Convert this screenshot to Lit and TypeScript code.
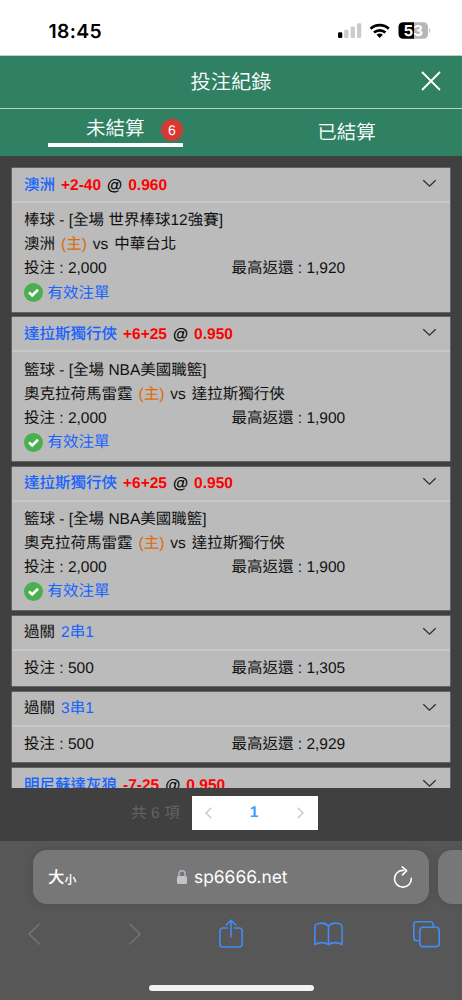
import { LitElement, html, css } from "lit";
import { customElement, property } from "lit/decorators.js";

interface Bet {
  pick: string;
  line?: string;
  odds?: string;
  parlay?: string;
  league?: string;
  home?: string;
  away?: string;
  stake?: string;
  payout?: string;
  valid?: boolean;
}

const mavericks: Bet = {
  pick: "達拉斯獨行俠",
  line: "+6+25",
  odds: "0.950",
  league: "籃球 - [全場 NBA美國職籃]",
  home: "奧克拉荷馬雷霆",
  away: "達拉斯獨行俠",
  stake: "2,000",
  payout: "1,900",
  valid: true,
};

const bets: Bet[] = [
  {
    pick: "澳洲",
    line: "+2-40",
    odds: "0.960",
    league: "棒球 - [全場 世界棒球12強賽]",
    home: "澳洲",
    away: "中華台北",
    stake: "2,000",
    payout: "1,920",
    valid: true,
  },
  mavericks,
  mavericks,
  { pick: "過關", parlay: "2串1", stake: "500", payout: "1,305" },
  { pick: "過關", parlay: "3串1", stake: "500", payout: "2,929" },
  { pick: "明尼蘇達灰狼", line: "-7-25", odds: "0.950" },
];

@customElement("status-bar")
class StatusBar extends LitElement {
  static styles = css`
    :host {
      display: flex;
      box-sizing: border-box;
      height: 56px;
      padding: 7px 31px 0 48.5px;
      align-items: center;
      justify-content: space-between;
      background: #fff;
      border-bottom: 1px solid #b9d2c8;
      font-family: Inter, sans-serif;
    }
    .time {
      padding-top: 1px;
      font-size: 19.3px;
      font-weight: 600;
      letter-spacing: 0.35px;
      color: #000;
    }
    svg {
      display: block;
    }
    .num {
      font: 700 15px Inter, sans-serif;
    }
  `;
  render() {
    return html`<span class="time">18:45</span>
      <svg width="94" height="20" viewBox="337 21 94 20">
        <rect x="338" y="32.2" width="4.3" height="5.8" rx="1.2" fill="#000" />
        <g fill="#cbcbcb">
          <rect x="344.2" y="29.7" width="4.3" height="8.3" rx="1.2" />
          <rect x="350.6" y="26.6" width="4.3" height="11.4" rx="1.2" />
          <rect x="357" y="23.3" width="4.3" height="14.7" rx="1.2" />
        </g>
        <g fill="none" stroke="#000" stroke-width="2.7">
          <path d="M370.6 28.8 A13 13 0 0 1 388.8 28.8" />
          <path d="M374 32.6 A8.4 8.4 0 0 1 385.4 32.6" />
        </g>
        <path d="M376.5 34.8 A4.6 4.6 0 0 1 382.9 34.8 L379.7 38 Z" fill="#000" />
        <path d="M403.5 22.2 H414 V38.8 H403.5 Q398.5 38.8 398.5 33.8 V27.2 Q398.5 22.2 403.5 22.2Z" fill="#000" />
        <path d="M414 22.2 H423 Q428 22.2 428 27.2 V33.8 Q428 38.8 423 38.8 H414Z" fill="#b7b7b7" />
        <path d="M429.2 28 Q431.4 30.5 429.2 33Z" fill="#b7b7b7" />
        <text class="num" x="403.5" y="36" fill="#fff" textLength="19.4" lengthAdjust="spacingAndGlyphs">53</text>
      </svg>`;
  }
}

@customElement("bet-card")
class BetCard extends LitElement {
  @property({ attribute: false }) bet!: Bet;
  static styles = css`
    :host {
      display: block;
      flex: none;
      background: #bbb;
      color: #111;
      font-size: 15.5px;
      box-shadow: 0 0 0 0.5px #858585;
    }
    .head {
      display: flex;
      box-sizing: border-box;
      height: 35px;
      padding: 1.5px 13px 0 12px;
      align-items: center;
      gap: 6px;
      border-bottom: 2px solid #c8c8c8;
      white-space: pre;
    }
    .bold {
      font-weight: 700;
    }
    .cjk {
      font-weight: 500;
    }
    .head svg {
      margin-left: auto;
      margin-top: -4px;
    }
    .blue {
      color: #1663ff;
    }
    .red {
      color: #f00;
    }
    .orange {
      color: #dc6b08;
    }
    .black {
      color: #000;
    }
    .body {
      padding: 6px 12px;
    }
    .line {
      display: flex;
      height: 24px;
      align-items: center;
      gap: 6px;
      white-space: pre;
    }
    .money {
      display: grid;
      grid-template-columns: 207.5px 1fr;
      height: 24px;
      align-items: center;
    }
    .short {
      padding: 5.5px 12px 5.8px;
    }
    .valid {
      display: flex;
      align-items: center;
      gap: 4.5px;
      height: 24.5px;
    }
    .valid svg {
      margin-top: -1px;
    }
  `;
  render() {
    const b = this.bet;
    return html`
      <div class="head">
        ${b.parlay
          ? html`<span>${b.pick}</span><span class="blue">${b.parlay}</span>`
          : html`<span class="blue cjk">${b.pick}</span><span class="red bold">${b.line}</span
              ><span class="black bold">@</span><span class="red bold">${b.odds}</span>`}
        <svg width="15" height="9" viewBox="0 0 15 9" fill="none" stroke="#2b2b2b" stroke-width="1.2">
          <path d="M1.3 1.2 L7.5 7.2 L13.7 1.2" />
        </svg>
      </div>
      ${b.stake
        ? html`<div class="body ${b.league ? "" : "short"}">
            ${b.league
              ? html`<div class="line">${b.league}</div>
                  <div class="line">
                    <span>${b.home}</span><span class="orange">(主)</span><span>vs</span><span>${b.away}</span>
                  </div>`
              : ""}
            <div class="money"><span>投注 : ${b.stake}</span><span>最高返還 : ${b.payout}</span></div>
            ${b.valid
              ? html`<div class="valid">
                  <svg width="19" height="19" viewBox="0 0 19 19">
                    <circle cx="9.5" cy="9.5" r="9.5" fill="#4bae50" />
                    <path d="M5 9.4 L8.2 12.4 L14 6.8" fill="none" stroke="#fff" stroke-width="2.6" />
                  </svg>
                  <span class="blue">有效注單</span>
                </div>`
              : ""}
          </div>`
        : ""}
    `;
  }
}

@customElement("browser-bar")
class BrowserBar extends LitElement {
  static styles = css`
    :host {
      display: flex;
      flex-direction: column;
      box-sizing: border-box;
      height: 159px;
      padding-top: 9px;
      background: #575757;
      overflow: hidden;
    }
    svg {
      display: block;
    }
    .tabs {
      display: flex;
      gap: 9px;
      padding-left: 33px;
    }
    .address {
      display: flex;
      box-sizing: border-box;
      flex: none;
      width: 396px;
      height: 54px;
      padding: 0 16px 0 15px;
      align-items: center;
      border-radius: 14px;
      background: #777;
      box-shadow: 0 0 10px #0000001f;
      color: #fff;
    }
    .next {
      flex: none;
      width: 60px;
      height: 54px;
      border-radius: 14px;
      background: #777;
      box-shadow: 0 0 10px #0000001f;
    }
    .big {
      padding-top: 2px;
      font-size: 16.5px;
      font-weight: 500;
    }
    .small {
      padding-top: 5px;
      font-size: 12px;
      font-weight: 500;
    }
    .site {
      display: flex;
      flex: 1;
      align-items: center;
      justify-content: center;
      gap: 7px;
      padding-right: 5px;
      font: 17.4px Inter, sans-serif;
    }
    .tools {
      display: grid;
      grid-template-columns: 101px 91px 95px 99px 27px;
      padding: 15px 22px 0 27px;
    }
    .home {
      width: 165px;
      height: 6px;
      margin: 36px 0 0 149px;
      border-radius: 3px;
      background: #f2f2f2;
    }
  `;
  render() {
    return html`
      <div class="tabs">
        <div class="address">
          <span class="big">大</span><span class="small">小</span>
          <div class="site">
            <svg width="10" height="14" viewBox="0 0 10 14">
              <path d="M2 7 V3.8 A3 3 0 0 1 8 3.8 V7" fill="none" stroke="#b7b7be" stroke-width="1.4" />
              <rect y="6" width="10" height="8" rx="1.5" fill="#c2c2ca" />
            </svg>
            <span>sp6666.net</span>
          </div>
          <svg width="20" height="22" viewBox="0 0 20 22" fill="none" stroke="#fff" stroke-width="1.6" stroke-linecap="round" stroke-linejoin="round">
            <path d="M10.6 4.4 A8.4 8.4 0 1 0 18.3 12.3" />
            <path d="M9.3 .9 L13.6 4.7 L9.5 8.9" />
          </svg>
        </div>
        <div class="next"></div>
      </div>
      <div class="tools">
        <svg width="14" height="30" viewBox="0 0 14 30" fill="none" stroke="#737373" stroke-width="1.6" stroke-linecap="round"><path d="M12.3 5 L2 15 L12.3 25" /></svg>
        <svg width="14" height="30" viewBox="0 0 14 30" fill="none" stroke="#737373" stroke-width="1.6" stroke-linecap="round"><path d="M1.7 5 L12 15 L1.7 25" /></svg>
        <svg width="24" height="30" viewBox="0 0 24 30" fill="none" stroke="#428cf2" stroke-width="1.6" stroke-linecap="round" stroke-linejoin="round">
          <path d="M8.5 9 H3.8 Q.9 9 .9 12 V25 Q.9 28 3.8 28 H20.2 Q23.1 28 23.1 25 V12 Q23.1 9 20.2 9 H15.5" />
          <path d="M12 18 V1.3 M7.2 6 L12 1.2 L16.8 6" />
        </svg>
        <svg width="29" height="30" viewBox="0 0 29 30" fill="none" stroke="#428cf2" stroke-width="1.6" stroke-linejoin="round">
          <path d="M14.5 7 Q11.8 4.1 7.7 4.1 Q4.4 4.1 1.8 5.6 Q.9 6.2 .9 7.4 V25.6 Q4 23.6 7.7 23.6 Q11.8 23.6 14.5 25.6 Q17.2 23.6 21.3 23.6 Q25 23.6 28.1 25.6 V7.4 Q28.1 6.2 27.2 5.6 Q24.6 4.1 21.3 4.1 Q17.2 4.1 14.5 7 V25.6" />
        </svg>
        <svg width="27" height="30" viewBox="0 0 27 30" fill="none" stroke="#428cf2" stroke-width="1.6">
          <path d="M6.8 21.8 H4 Q.8 21.8 .8 18.6 V6 Q.8 2.8 4 2.8 H17 Q20.2 2.8 20.2 6 V8.2" />
          <rect x="6.8" y="8.2" width="19.4" height="19.4" rx="3.2" />
        </svg>
      </div>
      <div class="home"></div>
    `;
  }
}

@customElement("app-root")
class AppRoot extends LitElement {
  static styles = css`
    :host {
      display: flex;
      flex-direction: column;
      width: 462px;
      height: 1000px;
      overflow: hidden;
      background: #404040;
      font-family: "Liberation Sans", "Noto Sans CJK TC", sans-serif;
      line-height: 1;
      text-rendering: geometricPrecision;
    }
    .title {
      display: grid;
      grid-template-columns: 1fr auto 1fr;
      align-items: center;
      box-sizing: border-box;
      height: 53px;
      padding: 0 21px;
      background: #308064;
      border-bottom: 1px solid #c5cfca;
      color: #fff;
      font-size: 20.2px;
      font-weight: 350;
    }
    .name {
      grid-column: 2;
      padding-top: 2px;
    }
    .close {
      justify-self: end;
      margin-top: -2px;
    }
    .tabs {
      display: grid;
      grid-template-columns: 231px 231px;
      box-sizing: border-box;
      height: 47px;
      background: #308064;
      color: #fff;
      font-size: 19.5px;
      font-weight: 350;
    }
    .active {
      display: flex;
      box-sizing: border-box;
      width: 135px;
      height: 38px;
      margin-left: 48px;
      padding-left: 38px;
      align-items: center;
      justify-content: space-between;
      border-bottom: 4px solid #fff;
    }
    .active span {
      margin-top: 7px;
    }
    .active .badge {
      display: grid;
      width: 22px;
      height: 22px;
      place-items: center;
      border-radius: 50%;
      background: #d83832;
      font-size: 14px;
    }
    .settled {
      justify-self: center;
      align-self: center;
      padding-top: 2px;
    }
    .list {
      display: flex;
      flex-direction: column;
      box-sizing: border-box;
      height: 632px;
      padding: 12px 12px 0 12px;
      gap: 5.8px;
      overflow: hidden;
    }
    .pager {
      display: flex;
      box-sizing: border-box;
      height: 53px;
      padding: 8px 0 0 131px;
      color: #606266;
      font-size: 15.5px;
    }
    .total {
      width: 60.5px;
      padding-top: 10px;
      letter-spacing: 0.1px;
    }
    .pages {
      display: flex;
      box-sizing: border-box;
      width: 126px;
      height: 34px;
      padding: 0 14px 0 13px;
      align-items: center;
      justify-content: space-between;
      background: #fff;
      color: #409eff;
      font-weight: 700;
    }
  `;
  render() {
    return html`
      <status-bar></status-bar>
      <div class="title">
        <span class="name">投注紀錄</span>
        <svg class="close" width="20" height="20" viewBox="0 0 20 20" stroke="#fff" stroke-width="1.8">
          <path d="M1 1 L19 19 M19 1 L1 19" />
        </svg>
      </div>
      <div class="tabs">
        <div class="active"><span>未結算</span><span class="badge">6</span></div>
        <div class="settled">已結算</div>
      </div>
      <div class="list">${bets.map((b) => html`<bet-card .bet=${b}></bet-card>`)}</div>
      <div class="pager">
        <span class="total">共 6 項</span>
        <div class="pages">
          <svg width="7" height="12" viewBox="0 0 7 12" fill="none" stroke="#c0c4cc" stroke-width="1.3"><path d="M6.3 .7 L1 6 L6.3 11.3" /></svg>
          <span>1</span>
          <svg width="7" height="12" viewBox="0 0 7 12" fill="none" stroke="#c0c4cc" stroke-width="1.3"><path d="M.7 .7 L6 6 L.7 11.3" /></svg>
        </div>
      </div>
      <browser-bar></browser-bar>
    `;
  }
}
